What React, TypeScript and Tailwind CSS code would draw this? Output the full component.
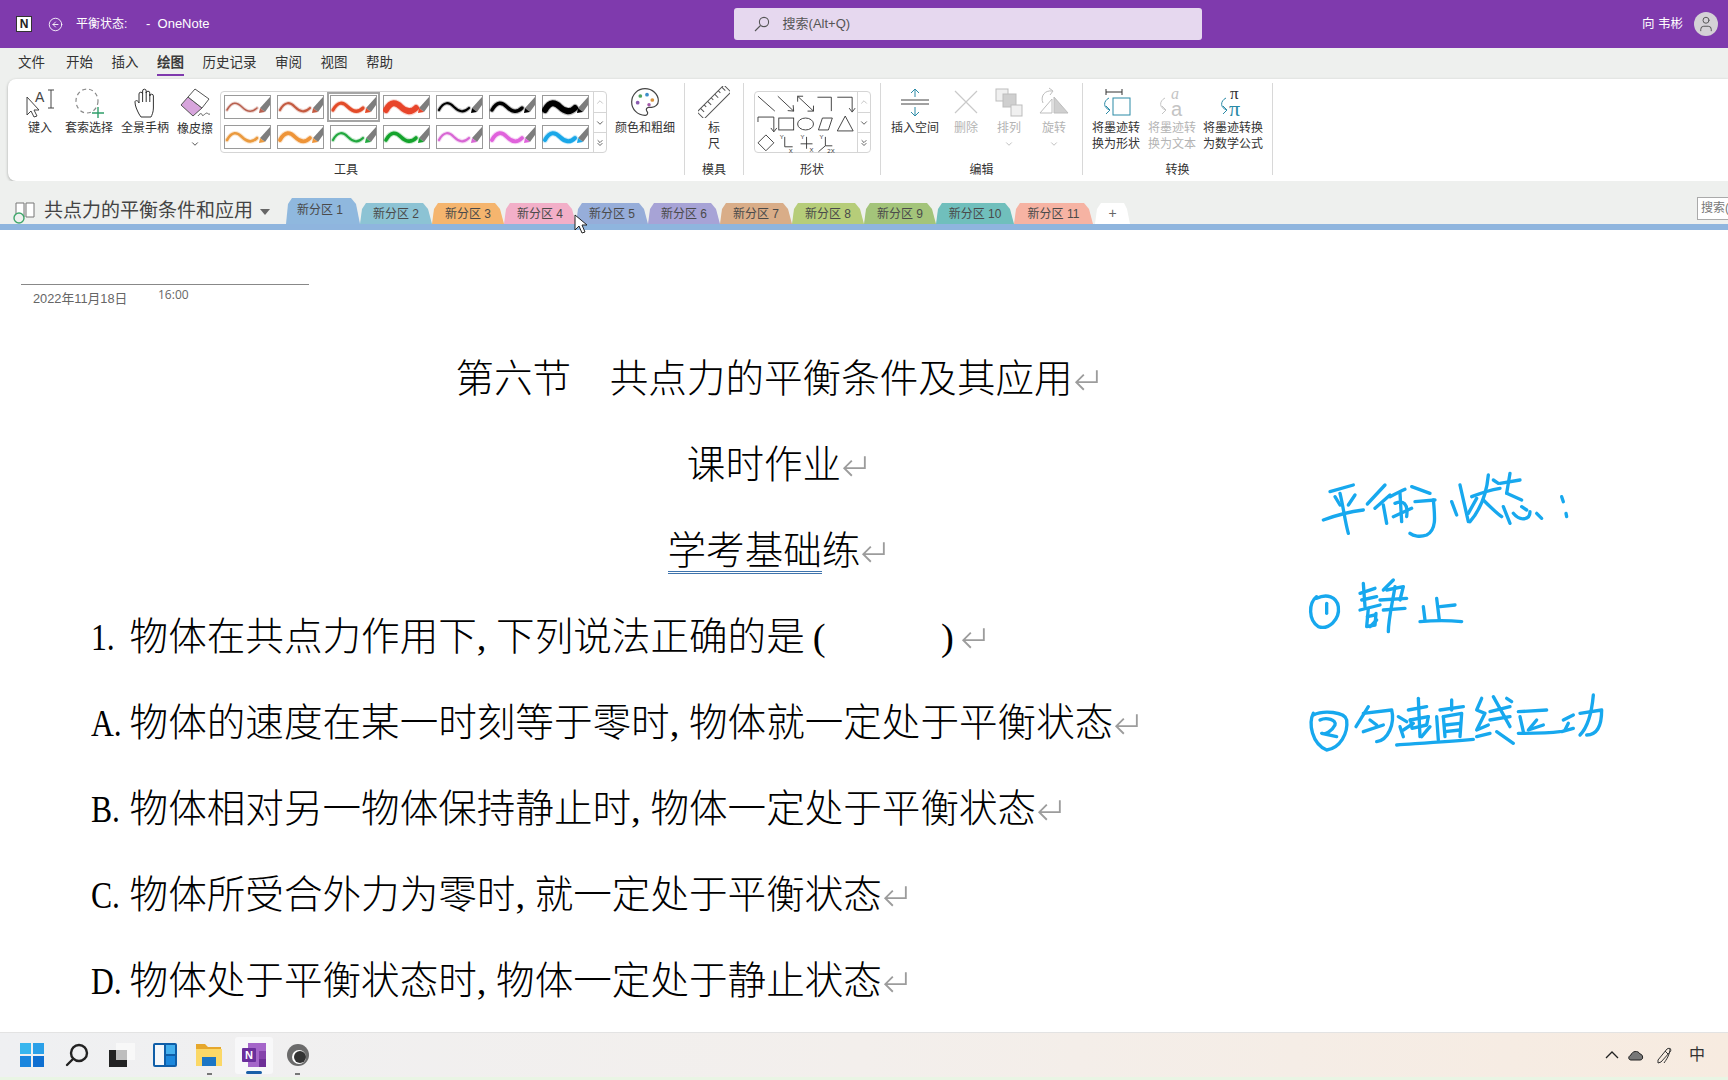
import React from "react";
import { CircleArrowLeft, User, ChevronDown, ChevronUp, ChevronsDown } from "lucide-react";

const menu = ["文件", "开始", "插入", "绘图", "历史记录", "审阅", "视图", "帮助"];

const pens: [string, number][][] = [
  [["#b8604f", 1.6], ["#c45a40", 2.2], ["#e34b28", 3.2], ["#e8452a", 6], ["#000000", 2.2], ["#000000", 3.4], ["#000000", 6]],
  [["#ea9a3f", 2.6], ["#ee9438", 3.8], ["#22a83f", 2.2], ["#14a32c", 3.6], ["#d866d4", 2.2], ["#e062dc", 3.8], ["#1aa7e8", 4]],
];

const tabs = [
  { t: "新分区 1", c: "bg-[#8fb8de] w-[74px] h-[26px] pr-[6px] pb-[2px]" },
  { t: "新分区 2", c: "bg-[#8cc3d4] w-[72px] h-[21px]" },
  { t: "新分区 3", c: "bg-[#f5b56e] w-[72px] h-[21px]" },
  { t: "新分区 4", c: "bg-[#f2afc8] w-[72px] h-[21px]" },
  { t: "新分区 5", c: "bg-[#96add9] w-[72px] h-[21px]" },
  { t: "新分区 6", c: "bg-[#a7a3d6] w-[72px] h-[21px]" },
  { t: "新分区 7", c: "bg-[#d9ad88] w-[72px] h-[21px]" },
  { t: "新分区 8", c: "bg-[#b6cd79] w-[72px] h-[21px]" },
  { t: "新分区 9", c: "bg-[#a3c47a] w-[72px] h-[21px]" },
  { t: "新分区 10", c: "bg-[#70bfbc] w-[78px] h-[21px]" },
  { t: "新分区 11", c: "bg-[#f6b3a3] w-[79px] h-[21px]" },
];

const Pen = ({ color, w }: { color: string; w: number }) => (
  <svg width="47" height="24" viewBox="0 0 47 24" className="block">
    <rect x="0.5" y="0.5" width="46" height="23" fill="#fff" stroke="#9a9a9a" />
    <path d="M3 15C8 6 13 7 18 12C23 17 28 18 33 13" fill="none" stroke={color} strokeWidth={w + 2} strokeLinecap="round" opacity="0.25" />
    <path d="M3 15C8 6 13 7 18 12C23 17 28 18 33 13" fill="none" stroke={color} strokeWidth={w} strokeLinecap="round" />
    <path d="M46 2V10L41 17L36 13Z" fill="#7d7d7d" />
    <path d="M36 13L41 17L35 18Z" fill={color} />
  </svg>
);

const Tool = ({ w, label, icon, off, chev }: { w: string; label: React.ReactNode; icon: React.ReactNode; off?: boolean; chev?: boolean }) => (
  <div className={`${w} flex flex-col items-center text-[12px] leading-[16px] ${off ? "text-[#b4b4b4]" : "text-[#333]"}`}>
    <div className="h-[37px] flex items-center justify-center">{icon}</div>
    <div className="text-center whitespace-nowrap">{label}</div>
    {chev && <ChevronDown size={10} className="mt-[3px]" />}
  </div>
);

const Group = ({ label, w, children }: { label: string; w: string; children: React.ReactNode }) => (
  <div className={`${w} h-[92px] shrink-0 flex flex-col border-r border-[#d8d8d8]`}>
    <div className="h-[76px] flex items-start">{children}</div>
    <div className="text-center text-[12px] leading-[16px] text-[#333] mt-[3px] h-[13px]">{label}</div>
  </div>
);

const Scroll = () => (
  <div className="w-[13px] h-full border-l border-[#d5d5d5] flex flex-col text-[#444]">
    <div className="h-[21px] flex items-center justify-center border-b border-[#d5d5d5] text-[#bbb]"><ChevronUp size={10} /></div>
    <div className="h-[20px] flex items-center justify-center border-b border-[#d5d5d5]"><ChevronDown size={10} /></div>
    <div className="flex-1 flex items-center justify-center"><ChevronsDown size={10} /></div>
  </div>
);

const IconType = () => (
  <svg width="32" height="32" viewBox="0 0 32 32" fill="none" stroke="#444" strokeWidth="1">
    <path d="M3 11L3 29L7 25L10 31L13 30L10 24L15 24Z" fill="#fff" />
    <text x="11" y="16" fontSize="14" fill="#444" stroke="none" fontFamily="Liberation Sans">A</text>
    <path d="M24 4H30M27 4V22M24 22H30" />
  </svg>
);
const IconLasso = () => (
  <svg width="32" height="32" viewBox="0 0 32 32" fill="none">
    <ellipse cx="14" cy="15" rx="11" ry="12" stroke="#8a8a8a" strokeWidth="1.2" strokeDasharray="4 3" />
    <path d="M25 21V33M19 27H31" stroke="#2f9e6a" strokeWidth="1.4" />
  </svg>
);
const IconHand = () => (
  <svg width="32" height="32" viewBox="0 0 32 32" fill="none" stroke="#333" strokeWidth="1">
    <path d="M10 28C8 24 6 20 6 16C6 14 9 14 10 17V8a1.800 1.800 0 0 1 3.600 0V5a1.800 1.800 0 0 1 3.600 0V7a1.800 1.800 0 0 1 3.600 0V10a1.800 1.800 0 0 1 3.600 0V22C24.400 26 23 29 22 31H12Z" fill="#fff" />
    <path d="M13.600 8V16M17.200 6V16M20.800 8V16" />
  </svg>
);
const IconEraser = () => (
  <svg width="32" height="32" viewBox="0 0 32 32" fill="none" stroke="#555" strokeWidth="1">
    <path d="M9 11L23 22L14 30L2 19Z" fill="#d7a5dc" />
    <path d="M16 3L30 13L23 22L9 11Z" fill="#fff" />
    <path d="M19 30C21 27 23 27 23 29C24 31 26 27 28 27C29 27 29 29 31 28" strokeWidth="0.9" />
  </svg>
);
const IconPalette = () => (
  <svg width="32" height="32" viewBox="0 0 24 24" fill="none" stroke="#444" strokeWidth="0.9">
    <path d="M12 22a1 1 0 0 1 0-20 10 9 0 0 1 10 9 5 5 0 0 1-5 5h-2.25a1.75 1.75 0 0 0-1.4 2.8l.3.4a1.75 1.75 0 0 1-1.4 2.8z" />
    <circle cx="13.5" cy="6.5" r="1.4" fill="#3c8fc9" stroke="none" />
    <circle cx="17.5" cy="10.5" r="1.4" fill="#d9923c" stroke="none" />
    <circle cx="6.5" cy="12.5" r="1.4" fill="#8a5bb0" stroke="none" />
    <circle cx="8.5" cy="7.5" r="1.4" fill="#4fa35f" stroke="none" />
    <circle cx="15" cy="14" r="1.3" fill="#a35aa8" stroke="none" />
  </svg>
);
const IconRuler = () => (
  <svg width="32" height="32" viewBox="0 0 32 32" fill="none" stroke="#555" strokeWidth="1">
    <g transform="rotate(-45 16 16)">
      <rect x="-3" y="11" width="38" height="10" fill="#fff" />
      <path d="M2 11V16M7 11V14M12 11V16M17 11V14M22 11V16M27 11V14M32 11V16" />
    </g>
  </svg>
);
const IconInsert = () => (
  <svg width="32" height="32" viewBox="0 0 32 32" fill="none">
    <path d="M2 14H30M2 18H30" stroke="#444" />
    <path d="M16 11V3M12 7L16 3L20 7M16 21V30M12 26L16 30L20 26" stroke="#2b8aa6" />
  </svg>
);
const IconDelete = () => (
  <svg width="32" height="32" viewBox="0 0 32 32" fill="none" stroke="#c9c9c9" strokeWidth="1.2">
    <path d="M5 5L27 27M27 5L5 27" />
  </svg>
);
const IconArrange = () => (
  <svg width="32" height="32" viewBox="0 0 32 32" stroke="#bdbdbd">
    <rect x="3" y="3" width="12" height="12" fill="#f0f0f0" />
    <rect x="10" y="8" width="13" height="13" fill="#cfcfcf" />
    <rect x="18" y="19" width="11" height="11" fill="#f0f0f0" />
  </svg>
);
const IconRotate = () => (
  <svg width="32" height="32" viewBox="0 0 32 32" fill="none" stroke="#bdbdbd">
    <path d="M16 27V11L30 27Z" fill="#cfcfcf" />
    <path d="M14 27V13L2 27Z" />
    <path d="M5 17C2 10 7 4 14 5M11 2L15 5L12 9" />
  </svg>
);
const Curl = ({ c }: { c: string }) => (
  <path d="M9 12C3 15 3 22 10 24M6 20L10 24L6 28" stroke={c} />
);
const IconShape = () => (
  <svg width="32" height="32" viewBox="0 0 32 32" fill="none">
    <path d="M6 3V9M22 3V9M6 6H22" stroke="#333" />
    <rect x="13" y="12" width="17" height="17" stroke="#2b8aa6" />
    <Curl c="#2b8aa6" />
  </svg>
);
const IconText = () => (
  <svg width="32" height="32" viewBox="0 0 32 32" fill="none">
    <text x="15" y="13" fontSize="16" fontStyle="italic" fill="#c4c4c4" fontFamily="Liberation Serif">a</text>
    <text x="15" y="30" fontSize="20" fill="#c4c4c4" fontFamily="Liberation Sans">a</text>
    <Curl c="#c4c4c4" />
  </svg>
);
const IconMath = () => (
  <svg width="32" height="32" viewBox="0 0 32 32" fill="none">
    <text x="13" y="13" fontSize="17" fill="#333" fontFamily="Liberation Serif">π</text>
    <text x="12" y="30" fontSize="22" fill="#2b8aa6" fontFamily="Liberation Serif">π</text>
    <Curl c="#2b8aa6" />
  </svg>
);

const Shapes = () => (
  <svg width="103" height="62" viewBox="0 0 103 62" fill="none" stroke="#333" strokeWidth="0.9" className="block">
    <path d="M3 4L20 19" />
    <path d="M23 4L39 19M33 18.500L39 19L38.500 13" />
    <path d="M43 4L59 19M43 9.500L43 4L48.500 4M53 19L59 19L59 13.500" />
    <path d="M63 5H77V19" />
    <path d="M83 5H98V19M95 16L98 20L101 16" />
    <path d="M3 30V25H19V39M16 36L19 40L22 36" />
    <rect x="24" y="26" width="15" height="12" />
    <ellipse cx="51" cy="32" rx="8" ry="6" />
    <path d="M68 26H78L74 38H64Z" />
    <path d="M91 24L99 39H83Z" />
    <path d="M11 43L19 51L11 59L3 51Z" />
    <path d="M30 45V55H38" />
    <path d="M52 45V57M46 52H58" />
    <path d="M71 45V54M64 60L71 54H78" />
    <g stroke="none" fill="#333" fontSize="6" fontFamily="Liberation Sans">
      <text x="25" y="47">Y</text><text x="34" y="61">X</text>
      <text x="46" y="47">Y</text><text x="55" y="60">X</text>
      <text x="65" y="47">Y</text><text x="73" y="61">2X</text>
    </g>
  </svg>
);

const H = ({ children, w = "w-[19.3px]" }: { children?: React.ReactNode; w?: string }) => (
  <span className={`inline-block ${w} [font-family:'Liberation_Serif',serif]`}>{children}</span>
);

const L = ({ children }: { children: React.ReactNode }) => (
  <span className="inline-block w-[38.6px] [font-family:'Liberation_Serif',serif]">
    <span className="inline-block origin-left scale-x-[0.82]">{children}</span>
  </span>
);

const Mark = () => (
  <svg width="26" height="26" viewBox="0 0 24 24" fill="none" stroke="#9c9c9c" strokeWidth="1.7" className="inline-block align-[-1px]">
    <path d="M22 3V14H3M10 7L3 14L10 21" />
  </svg>
);

const Line = ({ children, center }: { children: React.ReactNode; center?: boolean }) => (
  <div className={`h-[86.2px] leading-[86.2px] whitespace-nowrap ${center ? "text-center" : ""}`}>{children}</div>
);

const ink = [
  "M150 125L220 105", "M165 140L180 165", "M225 135L205 165", "M130 210C170 195 210 185 250 180", "M180 130C190 170 195 215 205 250",
  "M315 105L262 162", "M285 175L330 135", "M310 165L320 220", "M330 140C350 130 360 125 375 118", "M345 160C370 150 385 160 380 200", "M340 200L395 175", "M360 130L365 215", "M395 110L450 130", "M405 155L465 150", "M460 150C465 200 470 240 440 255C420 262 400 258 390 250",
  "M540 105L565 215", "M515 155L530 195", "M590 145L565 190", "M575 140C600 130 630 120 660 115", "M625 75C620 130 600 180 570 215", "M610 150C630 170 650 190 665 200", "M640 90L655 100",
  "M660 100L720 90", "M690 70L680 130", "M680 130L725 150", "M670 170L690 220", "M700 190C720 215 750 210 750 185", "M770 190L785 205", "M725 170L740 180", "M845 140L850 155", "M858 190L860 200",
  "M110 440C85 460 85 510 115 530C145 540 180 510 175 470C170 440 140 430 110 445", "M140 460L140 490",
  "M250 400L255 470", "M240 430L285 415", "M245 450L290 440", "M240 480L300 465", "M265 475L260 530L285 525L288 490", "M262 500L285 495", "M340 390L310 420", "M320 420L370 410L360 450", "M300 450L380 445", "M310 480L375 475", "M345 410C335 470 325 510 325 545", "M290 510L270 530",
  "M420 515C470 510 500 510 545 515", "M470 445L478 510", "M480 470L525 465", "M430 470L435 510",
  "M100 790C85 820 95 880 140 900C180 895 205 850 200 810C195 785 130 780 100 795", "M120 810C140 800 170 810 165 825C155 845 135 855 125 850L170 860",
  "M265 770L228 830", "M250 790L335 780C345 820 325 870 290 875", "M270 810L290 825", "M250 845L310 825",
  "M350 885C420 880 500 875 580 868", "M385 780L440 770", "M415 745L420 860", "M390 810L445 800", "M392 810L396 835L440 825L445 800", "M370 840L400 820", "M450 830L425 860", "M355 800L380 815", "M360 830L370 860",
  "M480 780L550 770", "M515 750L515 780", "M490 800L495 860", "M490 800L545 790L540 860", "M495 825L540 820", "M495 845L540 840", "M470 800L475 870",
  "M605 745L590 780L615 790L590 840L625 825", "M590 860L630 850", "M640 740L690 830", "M630 785L690 770", "M630 810L690 800", "M700 880L650 845", "M680 745L695 755",
  "M715 785L800 780", "M715 850C750 850 800 850 840 845", "M720 800L730 845", "M770 810L745 840L790 825",
  "M850 810L880 795", "M845 845L880 835", "M865 820L855 840", "M900 790L965 780C965 830 950 855 920 855", "M940 735C935 790 925 830 900 855",
];

export default function App() {
  return (
    <div className="relative w-[1728px] h-[1080px] overflow-hidden flex flex-col bg-white [font-family:'Liberation_Sans','Noto_Sans_CJK_SC',sans-serif]">
      {/* title bar */}
      <div className="h-[48px] shrink-0 bg-[#7f3aad] flex items-center text-white text-[12px]">
        <div className="ml-[16px] w-[16px] h-[16px] bg-white flex items-center justify-center border border-[#333]">
          <span className="text-[#222] text-[12px] font-bold leading-none">N</span>
        </div>
        <CircleArrowLeft size={15} strokeWidth={1.4} className="ml-[16px]" />
        <span className="ml-[13px] w-[70px]">平衡状态:</span>
        <span className="text-[13px]">- &nbsp;OneNote</span>
        <div className="ml-[524px] w-[468px] h-[32px] rounded-[3px] bg-[#e6d8ef] flex items-center text-[#555] text-[13px]">
          <svg width="16" height="16" viewBox="0 0 16 16" fill="none" stroke="#555" strokeWidth="1.1" className="ml-[20px]">
            <circle cx="10" cy="6" r="4.600" /><path d="M6.500 9.500L1 15" />
          </svg>
          <span className="ml-[13px]">搜索(Alt+Q)</span>
        </div>
        <span className="ml-auto text-[12.500px]">向 韦彬</span>
        <div className="ml-[11px] mr-[10px] w-[24px] h-[24px] rounded-full bg-[#d4d1d6] flex items-center justify-center">
          <User size={18} strokeWidth={1.3} className="text-[#555]" />
        </div>
      </div>

      {/* menu */}
      <div className="h-[31px] shrink-0 bg-[#eef0ee] flex items-start pl-[18px] gap-[18.500px] text-[13.500px] text-[#333]">
        {menu.map((m) => (
          <div key={m} className={`h-[28px] leading-[30px] relative ${m === "文件" ? "mr-[2.500px]" : ""} ${m === "绘图" ? "font-bold text-[#3b3b3b] border-b-2 border-[#7f3aad]" : ""}`}>{m}</div>
        ))}
      </div>

      {/* ribbon + strip */}
      <div className="bg-[#eef0ee] pl-[8px] shrink-0">
        <div className="h-[102px] bg-white rounded-l-[8px] shadow-[0_1px_3px_rgba(0,0,0,0.3)] py-[4px] flex">
          <Group label="工具" w="w-[677px]">
            <div className="w-[8px]" />
            <Tool w="w-[48px]" label="键入" icon={<IconType />} />
            <Tool w="w-[50px]" label="套索选择" icon={<IconLasso />} />
            <Tool w="w-[62px]" label="全景手柄" icon={<IconHand />} />
            <Tool w="w-[38px]" label={<span className="relative top-[1px]">橡皮擦</span>} icon={<IconEraser />} chev />
            <div className="ml-[6px] mt-[8px] w-[387px] h-[62px] rounded-[4px] border border-[#d5d5d5] flex">
              <div className="flex-1 flex flex-col pl-[3px] pt-[3px] gap-[6px]">
                {pens.map((row, i) => (
                  <div key={i} className="flex gap-[6px]">
                    {row.map(([c, w], j) => (
                      <div key={j} className={i === 0 && j === 2 ? "outline-2 outline-offset-1 outline-[#a5a5a5] bg-[#ddd]" : ""}>
                        <Pen color={c} w={w} />
                      </div>
                    ))}
                  </div>
                ))}
              </div>
              <Scroll />
            </div>
            <Tool w="w-[76px]" label="颜色和粗细" icon={<IconPalette />} />
          </Group>
          <Group label="模具" w="w-[59px]">
            <Tool w="w-[59px]" label={<>标<br />尺</>} icon={<IconRuler />} />
          </Group>
          <Group label="形状" w="w-[137px]">
            <div className="ml-[10px] mt-[8px] w-[117px] h-[62px] rounded-[4px] border border-[#d5d5d5] flex">
              <Shapes />
              <Scroll />
            </div>
          </Group>
          <Group label="编辑" w="w-[202px]">
            <div className="w-[6px]" />
            <Tool w="w-[56px]" label="插入空间" icon={<IconInsert />} />
            <Tool w="w-[46px]" label="删除" icon={<IconDelete />} off />
            <Tool w="w-[40px]" label="排列" icon={<IconArrange />} off chev />
            <Tool w="w-[50px]" label="旋转" icon={<IconRotate />} off chev />
          </Group>
          <Group label="转换" w="w-[190px]">
            <div className="w-[7px]" />
            <Tool w="w-[52px]" label={<>将墨迹转<br />换为形状</>} icon={<IconShape />} />
            <Tool w="w-[60px]" label={<>将墨迹转<br />换为文本</>} icon={<IconText />} off />
            <Tool w="w-[62px]" label={<>将墨迹转换<br />为数学公式</>} icon={<IconMath />} />
          </Group>
        </div>
      </div>

      {/* section tabs */}
      <div className="h-[43px] shrink-0 bg-[#eef0ee] flex items-end">
        <div className="h-[43px] w-[286px] shrink-0 flex items-center pl-[13px] pt-[18px] text-[19px] text-[#444]">
          <svg width="26" height="24" viewBox="0 0 26 24" fill="none" className="shrink-0">
            <path d="M3 3H11V17H3ZM13 3H21V17H13Z" fill="#fff" stroke="#777" />
            <circle cx="6" cy="18" r="5" fill="#eef0ee" stroke="#3fa66b" strokeWidth="1.4" />
          </svg>
          <span className="ml-[5px] whitespace-nowrap">共点力的平衡条件和应用</span>
          <svg width="10" height="6" viewBox="0 0 10 6" className="ml-[7px] shrink-0"><path d="M0 0H10L5 6Z" fill="#666" /></svg>
        </div>
        <div className="flex items-end">
          {tabs.map((t) => (
            <div key={t.t} className={`${t.c} flex items-center justify-center text-[12px] text-[#4a4a4a] [clip-path:polygon(0_100%,2px_6px,6px_0,calc(100%-9px)_0,calc(100%-4px)_6px,100%_100%)]`}>
              <span className="whitespace-nowrap">{t.t}</span>
            </div>
          ))}
          <div className="ml-[2px] w-[35px] h-[21px] bg-white flex items-center justify-center text-[14px] text-[#666] [clip-path:polygon(0_100%,2px_6px,6px_0,calc(100%-6px)_0,calc(100%-3px)_6px,100%_100%)]">+</div>
        </div>
        <div className="ml-auto mb-[4px] w-[40px] h-[23px] border border-[#aaa] bg-white overflow-hidden text-[12px] leading-[21px] text-[#777] pl-[3px] whitespace-nowrap -mr-[9px]">搜索(Alt</div>
      </div>
      <div className="h-[6px] shrink-0 bg-[#8fb5de]" />

      {/* page */}
      <div className="relative flex-1 bg-white text-black">
        <div className="ml-[21px] mt-[54px] w-[288px] h-[52px] border-t border-[#888] flex items-start text-[#666] pl-[12px]">
          <span className="mt-[6px] w-[125px] text-[12.800px] leading-[16px]">2022年11月18日</span>
          <span className="mt-[2px] text-[12px] leading-[16px] [font-family:'Open_Sans',sans-serif]">16:00</span>
        </div>
        <div className="ml-[91px] w-[1372px] text-[38.6px] font-light">
          <Line center>第六节　共点力的平衡条件及其应用<Mark /></Line>
          <Line center>课时作业<Mark /></Line>
          <Line center>
            <span className="inline-block leading-[40px] border-b-[3px] border-double border-[#3f74ad]">学考基础</span>练<Mark />
          </Line>
          <div className="-mt-[1px]">
            <Line><L>1.</L>物体在共点力作用下<H>,</H>下列说法正确的是<H><span className="pl-[8px]">(</span></H><H w="w-[117px]" /><H>)</H><Mark /></Line>
            <Line><L>A.</L>物体的速度在某一时刻等于零时<H>,</H>物体就一定处于平衡状态<Mark /></Line>
            <Line><L>B.</L>物体相对另一物体保持静止时<H>,</H>物体一定处于平衡状态<Mark /></Line>
            <Line><L>C.</L>物体所受合外力为零时<H>,</H>就一定处于平衡状态<Mark /></Line>
            <Line><L>D.</L>物体处于平衡状态时<H>,</H>物体一定处于静止状态<Mark /></Line>
          </div>
        </div>
        <svg width="350" height="320" viewBox="0 0 1050 960" fill="none" stroke="#17a8ee" strokeWidth="10" strokeLinecap="round" strokeLinejoin="round" className="absolute left-[1280px] top-[220px]">
          {ink.map((d, i) => <path key={i} d={d} />)}
        </svg>
      </div>

      {/* taskbar */}
      <div className="h-[45px] shrink-0 border-t border-[#e3e3e3] bg-gradient-to-r from-[#eff0f2] via-[#f3efec] to-[#f7ebe0] flex items-center relative">
        <div className="ml-[20px] w-[24px] h-[24px] grid grid-cols-2 gap-[1.5px]">
          <div className="bg-[#38b6ee]" /><div className="bg-[#2ba0e8]" /><div className="bg-[#1a86de]" /><div className="bg-[#0f6fd1]" />
        </div>
        <svg width="24" height="24" viewBox="0 0 24 24" fill="none" stroke="#222" strokeWidth="2.4" className="ml-[21px]">
          <circle cx="14" cy="10" r="8" /><path d="M8 16L2 22" strokeLinecap="round" />
        </svg>
        <svg width="28" height="26" viewBox="0 0 28 26" className="ml-[19px]">
          <rect x="8" y="1" width="19" height="17" fill="#f8f8f8" />
          <rect x="1" y="8" width="18" height="17" fill="#222" />
          <rect x="8" y="8" width="11" height="10" fill="#bdbdbd" />
        </svg>
        <svg width="24" height="24" viewBox="0 0 24 24" className="ml-[17px]">
          <rect x="0" y="0" width="24" height="24" rx="2" fill="#0f5ea8" />
          <rect x="2" y="2" width="9" height="20" fill="#f4f7fb" />
          <rect x="13" y="2" width="9" height="9" fill="#45b0ee" />
          <rect x="13" y="13" width="9" height="9" fill="#1c88dd" />
        </svg>
        <svg width="26" height="24" viewBox="0 0 26 24" className="ml-[19px]">
          <path d="M0 1H9L12 4H25V23H0Z" fill="#e6a72c" />
          <path d="M0 6H26V23H0Z" fill="#fbd867" />
          <rect x="6" y="14" width="14" height="9" fill="#1b75c4" />
        </svg>
        <div className="ml-[13px] w-[38px] h-[37px] bg-[#f8f8f9] rounded-[3px] flex items-center justify-center relative">
          <svg width="24" height="24" viewBox="0 0 24 24">
            <rect x="6" y="0" width="18" height="24" fill="#a566c9" />
            <rect x="17" y="8" width="7" height="8" fill="#8542ab" />
            <rect x="17" y="16" width="7" height="8" fill="#6e2f97" />
            <rect x="0" y="5" width="14" height="14" rx="1" fill="#6b2f9c" />
            <text x="3" y="16" fontSize="11" fontWeight="700" fill="#fff" fontFamily="Liberation Sans">N</text>
          </svg>
          <div className="absolute bottom-0 left-[11px] w-[16px] h-[3px] rounded-full bg-[#1a5fa8]" />
        </div>
        <svg width="22" height="22" viewBox="0 0 22 22" className="ml-[14px]">
          <circle cx="11" cy="11" r="11" fill="#6b6b6b" />
          <circle cx="12" cy="13" r="7" fill="#fff" />
          <circle cx="13" cy="13" r="6" fill="#333" />
        </svg>
        <div className="absolute left-[207px] top-[40px] w-[5px] h-[2px] bg-[#777]" />
        <div className="absolute left-[295px] top-[40px] w-[5px] h-[2px] bg-[#777]" />
        <div className="ml-auto flex items-center">
          <svg width="14" height="8" viewBox="0 0 14 8" fill="none" stroke="#222" strokeWidth="1.3"><path d="M1 7L7 1L13 7" /></svg>
          <svg width="16" height="12" viewBox="0 0 16 12" className="ml-[9px]">
            <path d="M3 11C0 11 0 7 3 6C4 2 10 1 12 5C15 5 16 11 12 11Z" fill="#777" stroke="#222" />
          </svg>
          <svg width="16" height="17" viewBox="0 0 16 17" fill="none" stroke="#333" className="ml-[13px]">
            <path d="M1 16V13L10 2C13 0 15 3 13 5L4 15ZM8 4L11 7M13 1C13 8 9 13 7 16" />
          </svg>
          <span className="ml-[16px] mr-[23px] text-[16px] leading-none text-[#333]">中</span>
        </div>
      </div>
      <div className="h-[3px] shrink-0 bg-[#e9f5e4]" />

      {/* mouse pointer */}
      <svg width="14" height="20" viewBox="0 0 14 20" className="absolute left-[574px] top-[214px]">
        <path d="M1 1V16L5 12L8 19L11 18L8 11H13Z" fill="#fff" stroke="#222" />
      </svg>
    </div>
  );
}
